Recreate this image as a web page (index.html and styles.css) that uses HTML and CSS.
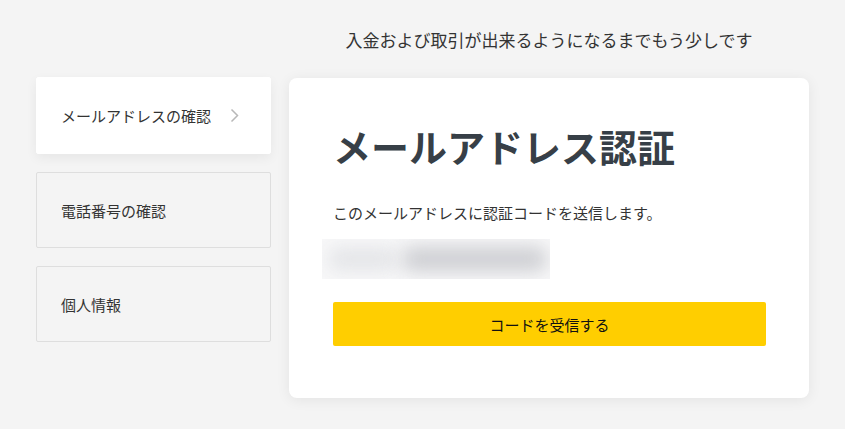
FILE: index.html
```html
<!DOCTYPE html>
<html lang="ja">
<head>
<meta charset="utf-8">
<link rel="stylesheet" href="styles.css">
</head>
<body>
<div class="page">
  <p class="lead">入金および取引が出来るようになるまでもう少しです</p>
  <nav class="steps">
    <div class="step active">
      <span>メールアドレスの確認</span>
      <svg class="chev" width="9" height="15" viewBox="0 0 9 15"><path d="M1.5 1.5 L7.5 7.5 L1.5 13.5" fill="none" stroke="#b8b8b8" stroke-width="1.5"/></svg>
    </div>
    <div class="step"><span>電話番号の確認</span></div>
    <div class="step"><span>個人情報</span></div>
  </nav>
  <main class="card">
    <h1 class="title">メールアドレス認証</h1>
    <p class="desc">このメールアドレスに認証コードを送信します。</p>
    <div class="email">
      <div class="blob blob-a"></div>
      <div class="blob blob-b"></div>
    </div>
    <button class="btn">コードを受信する</button>
  </main>
</div>
</body>
</html>
```
FILE: styles.css
```css
* { box-sizing: border-box; }
html, body { margin: 0; height: 100%; }
body {
  background: #f4f4f4;
  font-family: "Noto Sans CJK JP", "Noto Sans", sans-serif;
  color: #333;
}
.page {
  display: grid;
  grid-template-columns: 235px 520px;
  column-gap: 18px;
  padding: 28px 0 0 36px;
  align-items: start;
}
.lead {
  grid-column: 2;
  grid-row: 1;
  margin: 0 0 25px;
  text-align: center;
  font-size: 17px;
  line-height: 24px;
  color: #333;
}
.steps {
  grid-column: 1;
  grid-row: 2;
  display: flex;
  flex-direction: column;
  gap: 18px;
}
.step {
  height: 76px;
  display: flex;
  align-items: center;
  justify-content: space-between;
  padding: 0 31px 0 24px;
  font-size: 15px;
  color: #333;
  border: 1px solid #dedede;
  border-radius: 2px;
  background: #f4f4f4;
}
.step.active {
  height: 77px;
  background: #fff;
  border-color: #fff;
  box-shadow: 0 4px 12px rgba(0,0,0,0.06);
}
.chev { display: block; }
.card {
  grid-column: 2;
  grid-row: 2;
  margin-top: 1px;
  height: 320px;
  background: #fff;
  border-radius: 8px;
  box-shadow: 0 2px 14px rgba(0,0,0,0.07);
  padding: 45px 44px 0;
}
.title {
  margin: 0;
  font-size: 38px;
  line-height: 46px;
  font-weight: 700;
  color: #373f47;
}
.desc {
  margin: 33px 0 0;
  font-size: 15px;
  line-height: 22px;
  color: #333;
}
.email {
  position: relative;
  margin: 15px 0 0 -11px;
  width: 228px;
  height: 40px;
  background: #f8f8f9;
  overflow: hidden;
}
.blob {
  position: absolute;
  filter: blur(9px);
  border-radius: 10px;
}
.blob-a { left: 6px; top: 8px; width: 70px; height: 24px; background: #e4e5e8; }
.blob-b { left: 80px; top: 7px; width: 145px; height: 26px; background: #cfd0d4; }
.btn {
  display: block;
  margin-top: 23px;
  width: 433px;
  height: 44px;
  border: 0;
  border-radius: 2px;
  background: #ffce00;
  color: #111;
  font-family: inherit;
  font-size: 15px;
}
```
